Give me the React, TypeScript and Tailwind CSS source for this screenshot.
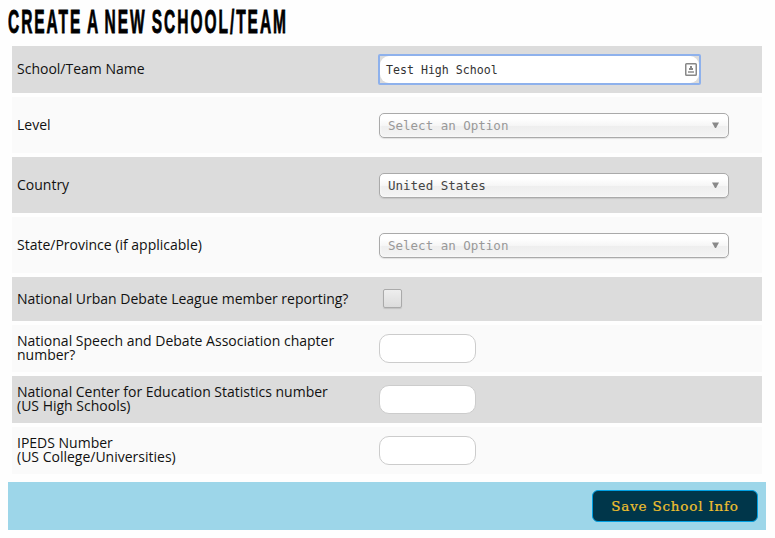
import type { ReactNode } from "react";

const mono = "font-['DejaVu_Sans_Mono','Liberation_Mono',monospace]";

function Row({ label, height, shaded, raised, children }: { label: ReactNode; height: string; shaded?: boolean; raised?: boolean; children: ReactNode }) {
  return (
    <div className={`flex w-[750px] items-center pl-[5px] ${height} ${shaded ? "bg-[#dcdcdc]" : "bg-[#fafafa]"}`}>
      <div className={`w-[362px] shrink-0 whitespace-nowrap text-[14px] leading-[14px] ${raised ? "pb-[2px]" : ""}`}>{label}</div>
      {children}
    </div>
  );
}

function Select({ value, muted }: { value: string; muted?: boolean }) {
  return (
    <button
      type="button"
      className="flex h-[25px] w-[350px] items-center justify-between rounded-[5px] border border-[#aaa] bg-[linear-gradient(#fff_20%,#f6f6f6_50%,#eee_52%,#f4f4f4_100%)] pl-2 pr-[9px] shadow-[0_0_3px_#fff_inset,0_1px_1px_rgba(0,0,0,0.1)]"
    >
      <span className={`${mono} whitespace-pre text-[12.5px] leading-[23px] ${muted ? "text-[#999]" : "text-[#444]"}`}>{value}</span>
      <svg width="7" height="6" viewBox="0 0 7 6" className="fill-[#888]">
        <path d="M0 0.5H7L4 6H3Z" />
      </svg>
    </button>
  );
}

function NumberField({ name }: { name: string }) {
  return <input aria-label={name} className="h-[29px] w-[97px] rounded-[10px] border border-[#ccc] bg-white px-2 outline-none" />;
}

export default function App() {
  return (
    <main className="h-[538px] w-[775px] bg-[#fefefe] font-['Open_Sans',sans-serif] text-[#111]">
      <div className="flex h-[46px] items-start pl-2 pt-[2px]">
        <h1 className="origin-left scale-x-[0.456] whitespace-nowrap font-['Liberation_Sans',sans-serif] text-[34px] font-bold leading-[38px] tracking-[4.3px] text-black [-webkit-text-stroke:0.9px_black] [word-spacing:-2.5px]">
          CREATE A NEW SCHOOL/TEAM
        </h1>
      </div>
      <div className="ml-3 flex flex-col gap-1">
        <Row label="School/Team Name" height="h-[47px]" shaded raised>
          <div className="-ml-px flex h-[31px] w-[323px] rounded-[2px] border-2 border-[#8eb1ec] bg-[#dcdcdc]">
            <div className="flex h-full w-full items-center justify-between rounded-[9px] bg-white pl-1.5 pr-[2px]">
              <span className={`${mono} whitespace-pre pt-px text-[11.6px] leading-[26px] text-[#333]`}>Test High School</span>
              <svg width="12" height="13" viewBox="0 0 12 13">
                <rect x="0.75" y="0.75" width="10.5" height="11.5" rx="0.8" fill="#fff" stroke="#888" strokeWidth="1.5" />
                <rect x="5" y="3" width="2" height="2" fill="#888" />
                <path d="M4 5H8V7H4Z" fill="#888" />
                <path d="M3 8H9V10H3Z" fill="#aaa" />
              </svg>
            </div>
          </div>
        </Row>
        <Row label="Level" height="h-14"><Select value="Select an Option" muted /></Row>
        <Row label="Country" height="h-14" shaded><Select value="United States" /></Row>
        <Row label="State/Province (if applicable)" height="h-14"><Select value="Select an Option" muted /></Row>
        <Row label="National Urban Debate League member reporting?" height="h-11" shaded>
          <div role="checkbox" aria-checked="false" className="-mt-px ml-1 h-[19px] w-[19px] rounded-[2px] border border-[#aaa] bg-linear-to-b from-[#eee] to-[#dcdcdc] shadow-[0_1px_1px_rgba(0,0,0,0.12)]" />
        </Row>
        <Row label={<>National Speech and Debate Association chapter<br />number?</>} height="h-[47px]" raised><NumberField name="NSDA chapter number" /></Row>
        <Row label={<>National Center for Education Statistics number<br />(US High Schools)</>} height="h-[47px]" shaded raised><NumberField name="NCES number" /></Row>
        <Row label={<>IPEDS Number<br />(US College/Universities)</>} height="h-[47px]" raised><NumberField name="IPEDS number" /></Row>
      </div>
      <div className="ml-2 mt-2 flex h-12 w-[758px] items-center justify-end bg-[#9dd6e9] pr-2">
        <button type="button" className="h-8 w-[166px] whitespace-nowrap rounded-[6px] border border-[#00a0e3] bg-[#00364a] pt-px font-['DejaVu_Serif',serif] text-[13.5px] tracking-[0.8px] text-[#efc02f] [-webkit-text-stroke:0.2px_#efc02f]">
          Save School Info
        </button>
      </div>
    </main>
  );
}
